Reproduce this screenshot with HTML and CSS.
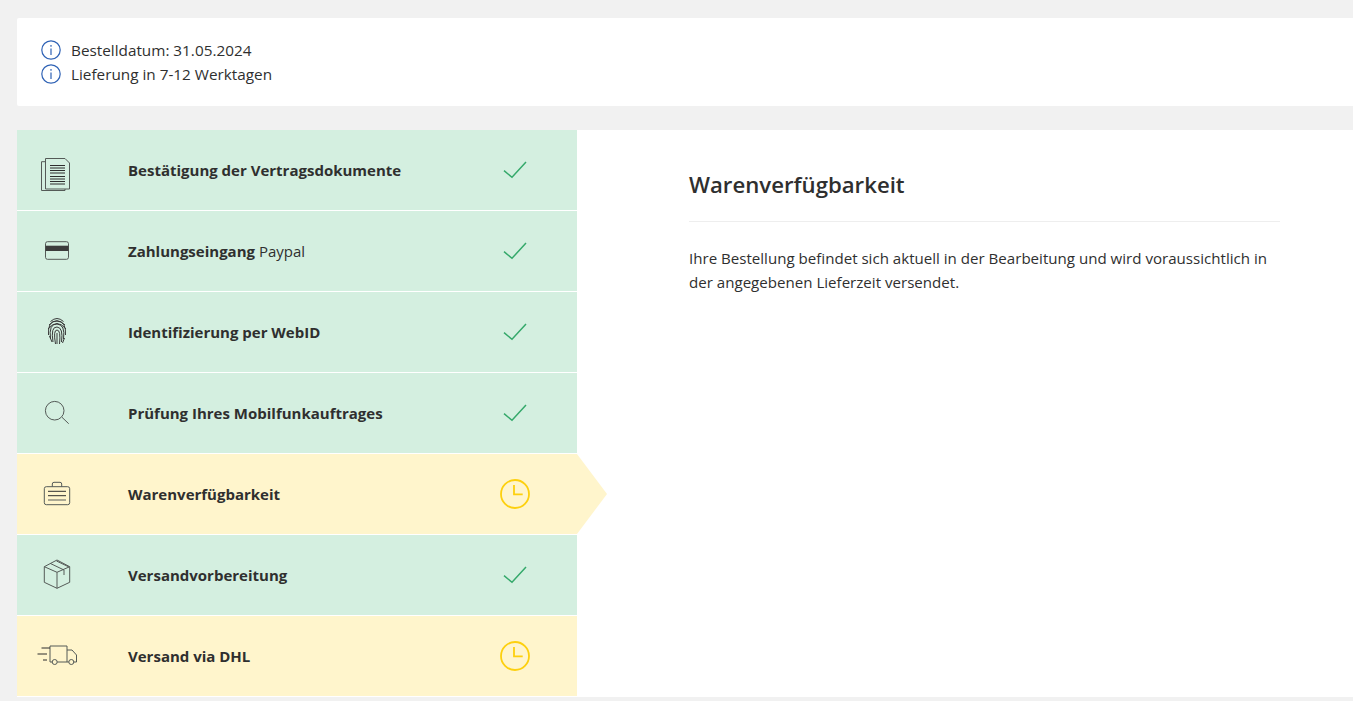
FILE: index.html
```html
<!DOCTYPE html>
<html lang="de">
<head>
<meta charset="utf-8">
<title>Bestellstatus</title>
<link rel="stylesheet" href="styles.css">
</head>
<body>
<main class="page">
  <section class="info-card">
    <div class="info-line">
      <svg class="info-icon" viewBox="0 0 20 20"><circle cx="10" cy="10" r="9.2"/><path d="M10 8.600v6.400M10 5v1.800"/></svg>
      <span>Bestelldatum: 31.05.2024</span>
    </div>
    <div class="info-line">
      <svg class="info-icon" viewBox="0 0 20 20"><circle cx="10" cy="10" r="9.2"/><path d="M10 8.600v6.400M10 5v1.800"/></svg>
      <span>Lieferung in 7-12 Werktagen</span>
    </div>
  </section>

  <section class="tracker">
    <ol class="steps">
      <li class="step done">
        <svg class="step-icon" viewBox="0 0 40 40"><path class="ln" d="M8.500 11.700H4.500V40.500H28V39"/><path class="ln" d="M8.500 8.500H28L32.500 13V39H8.500Z"/><path class="ln dark" d="M13 15.500H28M13 18H28M13 20.500H28M13 23H28M13 26.500H28M13 29H28M13 31.500H28M13 34H28"/></svg>
        <span class="step-label"><b>Bestätigung der Vertragsdokumente</b></span>
        <svg class="status" viewBox="0 0 32 32"><path class="check" d="M5 16.700L13 23.300 27 8"/></svg>
      </li>
      <li class="step done">
        <svg class="step-icon" viewBox="0 0 40 40"><rect class="ln" x="8.500" y="10.700" width="23" height="17.600" rx="2"/><rect class="fill" x="8.500" y="14.700" width="23" height="5.300"/></svg>
        <span class="step-label"><b>Zahlungseingang</b> Paypal</span>
        <svg class="status" viewBox="0 0 32 32"><path class="check" d="M5 16.700L13 23.300 27 8"/></svg>
      </li>
      <li class="step done">
        <svg class="step-icon" viewBox="0 0 40 40"><path class="ln thin" d="M13.500 9.500Q20 3.500 26.500 9.500M12 13Q20 4.500 28 13M11 17Q20 6 29 17M11.500 23Q10.500 8.500 20 9T28.500 23M13.500 27Q11.500 11.500 20 12T26.500 27M16 30Q13.500 14.500 20 15T24.500 30M18.500 32Q16 18 20 18T22.500 32M20 21V32M27.500 26L25.500 31M12.500 24L15 30"/></svg>
        <span class="step-label"><b>Identifizierung per WebID</b></span>
        <svg class="status" viewBox="0 0 32 32"><path class="check" d="M5 16.700L13 23.300 27 8"/></svg>
      </li>
      <li class="step done">
        <svg class="step-icon" viewBox="0 0 40 40"><circle class="ln" cx="17.700" cy="17.700" r="9.300"/><path class="ln" d="M25 24.300L31.700 30.700"/></svg>
        <span class="step-label"><b>Prüfung Ihres Mobilfunkauftrages</b></span>
        <svg class="status" viewBox="0 0 32 32"><path class="check" d="M5 16.700L13 23.300 27 8"/></svg>
      </li>
      <li class="step pending active">
        <svg class="step-icon" viewBox="0 0 40 40"><rect class="ln" x="7.300" y="12.700" width="25.400" height="18" rx="2"/><path class="ln" d="M15.300 12.700V10Q15.300 8.300 17 8.300H23Q24.700 8.300 24.700 10V12.700"/><path class="ln dark" d="M11 17.300H29M11 21.700H29"/><path class="bar" d="M11 26H29"/></svg>
        <span class="step-label"><b>Warenverfügbarkeit</b></span>
        <svg class="status" viewBox="0 0 32 32"><circle class="clock" cx="16" cy="16" r="14"/><path class="clock" d="M15 7V16.300H23.700"/></svg>
      </li>
      <li class="step done">
        <svg class="step-icon" viewBox="0 0 40 40"><path class="ln" d="M20 5L32.700 11.700V27.300L20 33.300L7.300 27.300V11.700ZM7.300 11.700L20 17.300L32.700 11.700M20 17.300V33.300M13 8.300L27 15M19.500 6L32 12M27 15V20"/></svg>
        <span class="step-label"><b>Versandvorbereitung</b></span>
        <svg class="status" viewBox="0 0 32 32"><path class="check" d="M5 16.700L13 23.300 27 8"/></svg>
      </li>
      <li class="step pending">
        <svg class="step-icon" viewBox="0 0 40 40"><path class="ln" d="M13 26V10H30V26M15.200 26H13M20.200 26H31.800M36.800 26H39.500V19L35 14H30"/><circle class="ln" cx="17.700" cy="26" r="2.500"/><circle class="ln" cx="34.300" cy="26" r="2.500"/><path class="ln dark" d="M4.500 12H13M.5 18H10M6 24H10"/></svg>
        <span class="step-label"><b>Versand via DHL</b></span>
        <svg class="status" viewBox="0 0 32 32"><circle class="clock" cx="16" cy="16" r="14"/><path class="clock" d="M15 7V16.300H23.700"/></svg>
      </li>
    </ol>
    <article class="detail">
      <h1 class="detail-title">Warenverfügbarkeit</h1>
      <p class="detail-text">Ihre Bestellung befindet sich aktuell in der Bearbeitung und wird voraussichtlich in der angegebenen Lieferzeit versendet.</p>
    </article>
  </section>
</main>
</body>
</html>
```
FILE: styles.css
```css
* { box-sizing: border-box; }
html, body { margin: 0; height: 100%; overflow: hidden; }
body { background: #f1f1f1; color: #2f2f2f; font: 15.200px/24px "Open Sans", sans-serif; }
.page { padding: 18px 0 0 17px; }
.info-card { height: 88px; background: #fff; padding: 20px 24px 0; margin-bottom: 24px; border-radius: 2px 0 0 2px; font-size: 15.300px; }
.info-line { display: flex; align-items: center; gap: 10px; height: 24px; }
.info-icon { width: 20px; height: 20px; fill: none; stroke: #2f62b5; stroke-width: 1.200; }
.tracker { display: flex; height: 567px; background: #fff; }
.steps { list-style: none; margin: 0; padding: 0; width: 560px; flex: none; display: flex; flex-direction: column; gap: 1px; background: #fff; }
.step { position: relative; height: 80px; flex: none; display: flex; align-items: center; }
.done { background: #d4efe0; }
.pending { background: #fff5cc; }
.active::after { content: ""; position: absolute; left: 100%; top: 0; border-style: solid; border-width: 40px 0 40px 30px; border-color: transparent transparent transparent #fff5cc; }
.step-icon { width: 40px; height: 40px; margin-left: 20px; flex: none; overflow: visible; }
.step-label { margin-left: 51px; flex: 1; font-size: 15px; }
.status { width: 32px; height: 32px; margin-right: 46px; flex: none; fill: none; }
.ln { fill: none; stroke: #545a57; stroke-width: 1; }
.ln.dark { stroke: #2d2d2d; }
.ln.thin { stroke: #3a3a3a; stroke-width: 1; }
.bar { fill: none; stroke: #8f8e80; stroke-width: 1.500; }
.fill { fill: #3c3c3c; }
.check { stroke: #35a96b; stroke-width: 1.500; }
.clock { stroke: #fdd00e; stroke-width: 1.800; }
.detail { flex: 1; padding: 32px 73px 0 112px; }
.detail-title { margin: 0; height: 60px; border-bottom: 1px solid #eee; font-size: 22.200px; line-height: 45px; font-weight: 600; }
.detail-text { margin: 24px 0 0; font-size: 15.100px; }
```
